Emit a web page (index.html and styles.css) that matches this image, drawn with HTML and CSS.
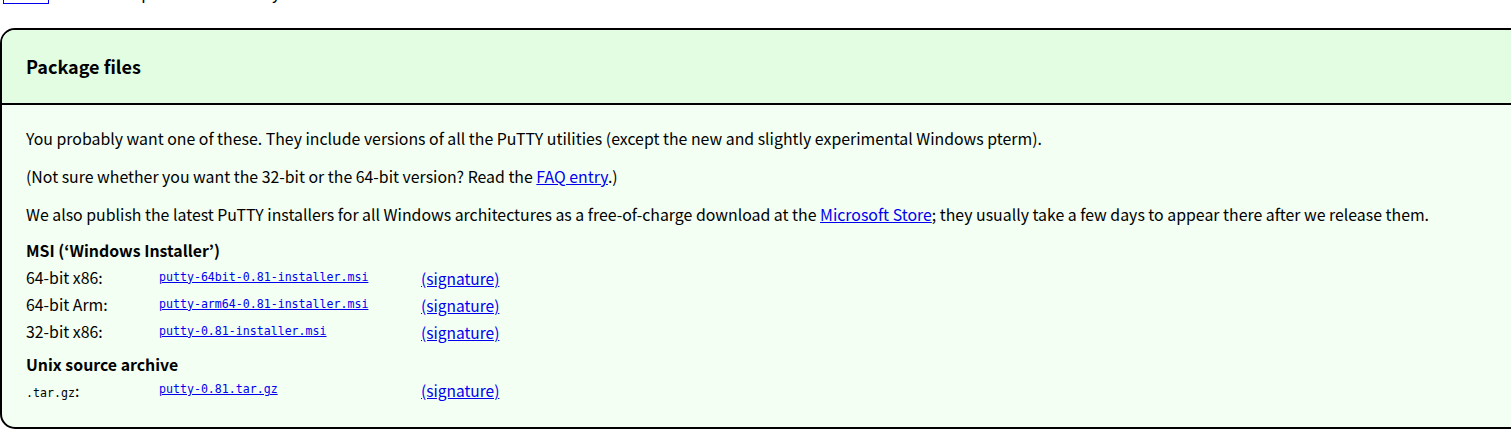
FILE: index.html
```html
<!DOCTYPE html>
<html lang="en">
<head>
<meta charset="utf-8">
<title>PuTTY download</title>
<link rel="stylesheet" href="styles.css">
</head>
<body>
<div class="topline">
  <p class="topline-text"><a href="#" class="boxed-link"><span class="boxed">&nbsp;</span></a>&nbsp;&nbsp;&nbsp;&nbsp;&nbsp;&nbsp;&nbsp;&nbsp;&nbsp;&nbsp;&nbsp;&nbsp;&nbsp;&nbsp;&nbsp;&nbsp;&nbsp;&nbsp;&nbsp;&nbsp;&nbsp;&nbsp;&nbsp;&nbsp;&nbsp;&nbsp;p&nbsp;&nbsp;&nbsp;&nbsp;&nbsp;&nbsp;&nbsp;&nbsp;&nbsp;&nbsp;&nbsp;&nbsp;&nbsp;&nbsp;&nbsp;&nbsp;&nbsp;&nbsp;&nbsp;&nbsp;&nbsp;&nbsp;&nbsp;&nbsp;&nbsp;&nbsp;&nbsp;&nbsp;&nbsp;&nbsp;&nbsp;&nbsp;&nbsp;&nbsp;y</p>
</div>
<section class="panel">
  <div class="panel-head">
    <h2>Package files</h2>
  </div>
  <div class="panel-body">
    <p>You probably want one of these. They include versions of all the PuTTY utilities (except the new and slightly experimental Windows pterm).</p>
    <p>(Not sure whether you want the 32-bit or the 64-bit version? Read the <a href="#">FAQ entry</a>.)</p>
    <p>We also publish the latest PuTTY installers for all Windows architectures as a free-of-charge download at the <a href="#">Microsoft Store</a>; they usually take a few days to appear there after we release them.</p>
    <h3>MSI (‘Windows Installer’)</h3>
    <div class="files">
      <div class="row"><span class="label">64-bit x86:</span><a class="fname" href="#">putty-64bit-0.81-installer.msi</a><a class="sig" href="#">(signature)</a></div>
      <div class="row"><span class="label">64-bit Arm:</span><a class="fname" href="#">putty-arm64-0.81-installer.msi</a><a class="sig" href="#">(signature)</a></div>
      <div class="row"><span class="label">32-bit x86:</span><a class="fname" href="#">putty-0.81-installer.msi</a><a class="sig" href="#">(signature)</a></div>
    </div>
    <h3 class="h-unix">Unix source archive</h3>
    <div class="files files-unix">
      <div class="row row-unix"><span class="label"><code>.tar.gz</code>:</span><a class="fname" href="#">putty-0.81.tar.gz</a><a class="sig" href="#">(signature)</a></div>
    </div>
  </div>
</section>
</body>
</html>
```
FILE: styles.css
```css
html, body {
  margin: 0;
  padding: 0;
  background: #ffffff;
  overflow: hidden;
}
body {
  font-family: "Noto Sans CJK KR", "Noto Sans", sans-serif;
  font-size: 15.87px;
  color: #000;
}
a {
  color: #0000ee;
  text-decoration: underline;
}

.topline {
  height: 4px;
  overflow: hidden;
}
.topline-text {
  margin: -18px 0 0 3px;
  line-height: 22px;
  white-space: nowrap;
}
.boxed {
  display: inline-block;
  width: 44px;
  height: 16px;
  border: 1px solid #0000ee;
  vertical-align: -5px;
}

.panel {
  margin-top: 24px;
  width: 1540px;
  border: 2px solid #000;
  border-radius: 15px;
  background: #f3fff3;
  overflow: hidden;
}
.panel-head {
  height: 73px;
  display: flex;
  align-items: center;
  padding: 0 24px;
  background: #e3fde3;
  border-bottom: 2px solid #000;
}
.panel-head h2 {
  margin: -2px 0 0;
  font-size: 18px;
  font-weight: bold;
  line-height: 24px;
}
.panel-body {
  padding: 23px 24px 24px;
}
.panel-body p {
  margin: 0 0 16px;
  line-height: 22px;
  font-size: 15.87px;
}
.panel-body h3 {
  margin: -1px 0 0;
  font-size: 15.87px;
  font-weight: bold;
  line-height: 20px;
}
.files {
  margin-top: 3px;
}
.row {
  display: grid;
  grid-template-columns: 133px 262px auto;
  align-items: center;
  height: 27px;
}
.label {
  font-size: 15.87px;
}
.fname {
  font-family: "DejaVu Sans Mono", "Liberation Mono", monospace;
  font-size: 11.6px;
  position: relative;
  top: -1px;
}
.sig {
  font-size: 15.5px;
}
.panel-body h3.h-unix {
  margin-top: 10px;
}
.files-unix {
  margin-top: 2px;
}
.row-unix {
  height: 26px;
}
.label code {
  font-family: "DejaVu Sans Mono", "Liberation Mono", monospace;
  font-size: 11.6px;
}
```
